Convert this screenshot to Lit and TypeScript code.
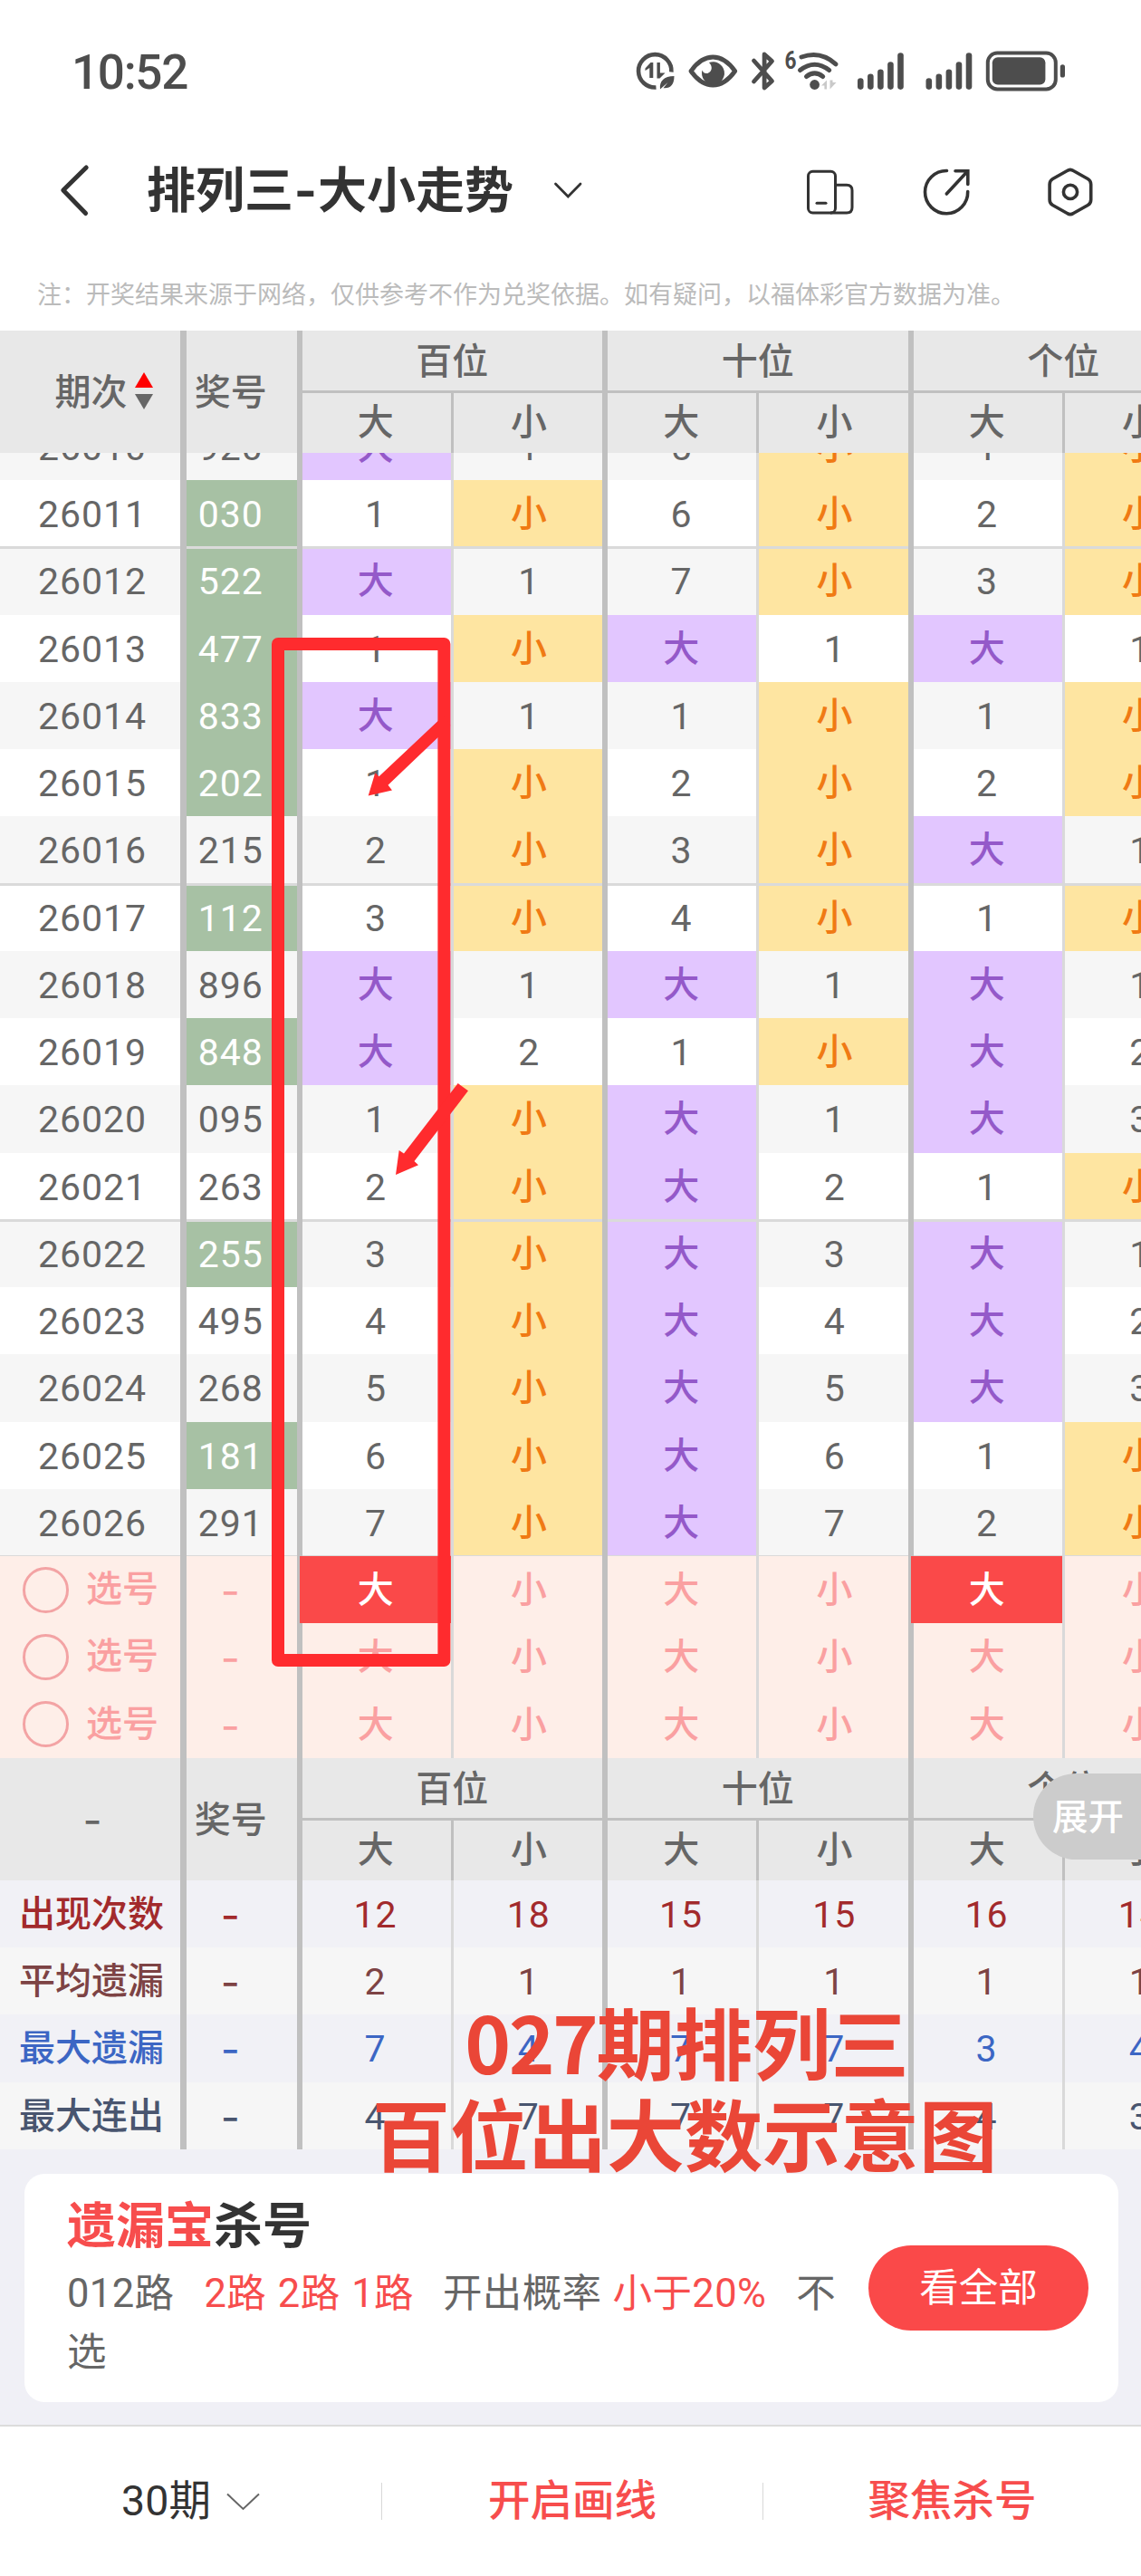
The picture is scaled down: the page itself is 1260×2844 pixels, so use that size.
import { LitElement, html, svg, css } from "lit";
import { customElement, property } from "lit/decorators.js";
import { classMap } from "lit/directives/class-map.js";

interface Draw {
  issue: string;
  code: string;
  group: boolean;
  cells: string;
}

const BIG = "大";
const SMALL = "小";

const DRAWS: Draw[] = [
  ["26010", "920", 0, "大15小1小"],
  ["26011", "030", 1, "1小6小2小"],
  ["26012", "522", 1, "大17小3小"],
  ["26013", "477", 1, "1小大1大1"],
  ["26014", "833", 1, "大11小1小"],
  ["26015", "202", 1, "1小2小2小"],
  ["26016", "215", 0, "2小3小大1"],
  ["26017", "112", 1, "3小4小1小"],
  ["26018", "896", 0, "大1大1大1"],
  ["26019", "848", 1, "大21小大2"],
  ["26020", "095", 0, "1小大1大3"],
  ["26021", "263", 0, "2小大21小"],
  ["26022", "255", 1, "3小大3大1"],
  ["26023", "495", 0, "4小大4大2"],
  ["26024", "268", 0, "5小大5大3"],
  ["26025", "181", 1, "6小大61小"],
  ["26026", "291", 0, "7小大72小"],
].map(([issue, code, group, cells]) => ({
  issue: issue as string,
  code: code as string,
  group: group === 1,
  cells: cells as string,
}));

const PICKS: number[][] = [[0, 4], [], []];

const STATS = [
  { label: "出现次数", tone: "count", values: [12, 18, 15, 15, 16, 14] },
  { label: "平均遗漏", tone: "avg", values: [2, 1, 1, 1, 1, 1] },
  { label: "最大遗漏", tone: "gap", values: [7, 4, 7, 7, 3, 4] },
  { label: "最大连出", tone: "run", values: [4, 7, 7, 7, 4, 3] },
];

@customElement("status-bar")
export class StatusBar extends LitElement {
  static styles = css`
    :host {
      display: flex;
      justify-content: space-between;
      align-items: center;
      height: 159px;
      padding: 0 80px 0 79px;
      box-sizing: border-box;
      color: #4d4d4d;
    }
    .time {
      font: 500 53px/60px Roboto, "Noto Sans", sans-serif;
      letter-spacing: -1.3px;
      padding-top: 1px;
    }
    svg {
      display: block;
    }
    .six {
      font: 700 27px Roboto, sans-serif;
    }
  `;

  private bars(x: number) {
    const tops = [85.7, 81, 76, 67.7, 57.7];
    return tops.map(
      (y, i) => svg`<rect x=${x + i * 11.05} y=${y} width="6.6" height=${98.4 - y} rx="3.3"></rect>`,
    );
  }

  render() {
    return html`
      <span class="time">10:52</span>
      <svg width="480" height="56" viewBox="700 51.5 480 56" fill="#4d4d4d">
        <path d="M724.5 96A18.2 18.2 0 1 1 741.4 79" fill="none" stroke="#4d4d4d" stroke-width="4.6"></path>
        <path d="M712.5 75l6-6.4h2.8v17h-4V74.500l-4.800 3zM725.500 68.500h3.400v11.500h5.600l-6 6h-3z"></path>
        <path d="M729 98c-1-9 4-14.500 15.500-14.500 0 10-4.500 14-12 13.200l5-6.200-6.800 6z"></path>
        <path d="M763 78c7-10 15-15.500 24.300-15.500S804.600 68 811.700 78c-7.100 10-15.100 15.500-24.400 15.500S770 88 763 78z" fill="none" stroke="#4d4d4d" stroke-width="4.8" stroke-linejoin="round"></path>
        <path d="M783 68.600a12.500 12.500 0 1 1-7.600 8.400c1 3 3.500 4 6 3.400 5-1.400 6-7.400 1.600-11.800z"></path>
        <path d="M832.500 66.500l20 22.500-8.400 7.500V59.500l8.400 7.500-20 22.500" fill="none" stroke="#4d4d4d" stroke-width="4.800" stroke-linejoin="round" stroke-linecap="round"></path>
        <text class="six" x="866.500" y="75.500" textLength="13" lengthAdjust="spacingAndGlyphs">6</text>
        <g fill="none" stroke="#4d4d4d" stroke-width="5" stroke-linecap="round">
          <path d="M885 62.500Q906 55 923 70.300"></path>
          <path d="M883.500 77Q899.600 64.500 915.700 77"></path>
          <path d="M890.500 84Q899.600 76.800 908.700 84"></path>
        </g>
        <circle cx="899.600" cy="93" r="5.400"></circle>
        <path d="M907 94l6-6v10h-2.600v-4zM916.500 88v10l7-7.500h-4V88z" fill="#c9c9c9"></path>
        ${this.bars(947)} ${this.bars(1022.5)}
        <rect x="1090.800" y="58" width="75" height="40" rx="10.500" fill="none" stroke="#4d4d4d" stroke-width="4"></rect>
        <rect x="1095.800" y="62.800" width="58.600" height="30.200" rx="6"></rect>
        <rect x="1170.800" y="70.700" width="5.200" height="14.300" rx="2.600"></rect>
      </svg>
    `;
  }
}

@customElement("nav-bar")
export class NavBar extends LitElement {
  static styles = css`
    :host {
      display: flex;
      align-items: center;
      height: 102px;
      padding: 0 48px 0 64px;
      box-sizing: border-box;
      color: #333;
    }
    svg {
      display: block;
      flex: none;
    }
    .title {
      margin: 0 43px 0 62px;
      padding-top: 2px;
      font: 700 54px/60px Inter, "Noto Sans CJK SC", sans-serif;
      white-space: nowrap;
    }
    .dash {
      display: inline-block;
      width: 27px;
      text-align: center;
    }
    .tools {
      display: flex;
      align-items: center;
      gap: 75px;
      margin-left: auto;
      padding-top: 4px;
    }
    .settings {
      margin-left: 6px;
    }
  `;

  render() {
    return html`
      <svg width="36" height="60" viewBox="64 181 36 60" fill="none" stroke="#333" stroke-width="5" stroke-linecap="round" stroke-linejoin="round">
        <path d="M95.200 186L69.800 211L94.600 236.500"></path>
      </svg>
      <span class="title">排列三<span class="dash">-</span>大小走势</span>
      <svg width="34" height="22" viewBox="611 200 34 22" fill="none" stroke="#333" stroke-width="2.800" stroke-linecap="round">
        <path d="M614.500 204L628.300 218L642 204"></path>
      </svg>
      <div class="tools">
        <svg width="54" height="56" viewBox="890 184.500 54 56" fill="none" stroke="#333" stroke-width="3">
          <rect x="892.500" y="189.800" width="30" height="45.700" rx="5"></rect>
          <path d="M922.500 204.800H935q6 0 6 6V229.500q0 6-6 6H917"></path>
          <path d="M902 224.800H912" stroke-linecap="round"></path>
        </svg>
        <svg width="56" height="56" viewBox="1019 184.500 56 56" fill="none" stroke="#333" stroke-width="3.600" stroke-linecap="round">
          <path d="M1045.500 189A23.600 23.600 0 1 0 1068.700 212"></path>
          <path d="M1045.300 214.500L1068.500 189.500M1055 189.200H1068.800V204"></path>
        </svg>
        <svg class="settings" width="56" height="58" viewBox="1156 183.500 56 58" fill="none" stroke="#333" stroke-width="3.600" stroke-linejoin="round">
          <path d="M1178.500 189q3.400-2.400 6.800 0L1201.300 198q3.400 2 3.400 6V221q0 4-3.400 6L1185.300 236q-3.400 2.400-6.800 0L1162.500 227q-3.400-2-3.400-6V204q0-4 3.400-6z"></path>
          <circle cx="1182" cy="212.400" r="7.600"></circle>
        </svg>
      </div>
    `;
  }
}

@customElement("trend-head")
export class TrendHead extends LitElement {
  @property({ type: Boolean }) sortable = false;

  static styles = css`
    :host {
      display: grid;
      grid-template-columns: 206px 127.5px repeat(3, 337.5px);
      height: 135px;
      background: #e8e8e8;
      color: #666;
      font: 500 40px/40px "Noto Sans CJK SC", sans-serif;
      text-align: center;
    }
    .lead,
    .group {
      box-sizing: border-box;
      border-right: 6.6px solid #c0c0c0;
    }
    .lead {
      display: flex;
      align-items: center;
      justify-content: center;
      gap: 8px;
      padding-bottom: 5px;
    }
    .lead svg {
      padding-top: 3px;
    }
    .issue {
      border-right-width: 7px;
      padding-left: 30px;
    }
    .issue.plain {
      padding: 1px 0 0 5px;
      font: 400 46px/40px Inter, sans-serif;
    }
    .code {
      padding-right: 24px;
    }
    .group {
      display: grid;
      grid-template-rows: 66px 66px;
      row-gap: 3px;
    }
    .name {
      display: flex;
      align-items: center;
      justify-content: center;
      box-sizing: border-box;
      padding-bottom: 4px;
      box-shadow: 0 3px 0 #c0c0c0;
    }
    .halves {
      display: grid;
      grid-template-columns: 167.250px 1fr;
    }
    .half {
      display: flex;
      align-items: center;
      justify-content: center;
      padding: 0 0 8px 2px;
    }
    .half:first-child {
      border-right: 3px solid #c0c0c0;
      padding: 0 2px 8px 0;
    }
    svg {
      display: block;
    }
  `;

  render() {
    return html`
      ${this.sortable
        ? html`<div class="lead issue">
            <span>期次</span>
            <svg width="20" height="41" viewBox="0 0 20 41">
              <path d="M10 0L20 17H0z" fill="#f00"></path>
              <path d="M0 24H20L10 41z" fill="#666"></path>
            </svg>
          </div>`
        : html`<div class="lead issue plain">-</div>`}
      <div class="lead code">奖号</div>
      ${["百位", "十位", "个位"].map(
        (name) => html`<div class="group">
          <div class="name">${name}</div>
          <div class="halves">
            <div class="half">${BIG}</div>
            <div class="half">${SMALL}</div>
          </div>
        </div>`,
      )}
    `;
  }
}

@customElement("trend-table")
export class TrendTable extends LitElement {
  static styles = css`
    :host {
      display: block;
      position: relative;
      overflow: hidden;
      height: 2007.75px;
    }
    .scroll {
      overflow: hidden;
      width: 1347px;
    }
    .rows {
      margin-top: -44.250px;
    }
    .row {
      display: grid;
      grid-template-columns: 206px 127.500px repeat(3, 167.250px 170.250px);
      height: 74.250px;
      background: #fff;
      color: #666;
      font: 400 41px/72px Roboto, "Noto Sans CJK SC", sans-serif;
      text-align: center;
    }
    .alt {
      background: #f6f6f6;
    }
    .cell {
      box-sizing: border-box;
      border-right: 6.600px solid #c0c0c0;
      padding: 2px 0 0 2px;
    }
    .big {
      border-right: 3px solid #d9d9d9;
      padding: 2px 2px 0 0;
    }
    .issue {
      border-right-width: 7px;
      padding-left: 5px;
      letter-spacing: 1px;
    }
    .code {
      padding: 2px 24px 0 0;
      letter-spacing: 1px;
    }
    .zh {
      font-size: 40px;
      font-weight: 500;
    }
    .dash {
      font-family: Inter, sans-serif;
      font-size: 46px;
    }
    .green {
      background: #a7c1a4;
      color: #fff;
    }
    .hit-big {
      background: #e2c6ff;
      color: #9459c9;
    }
    .hit-small {
      background: #fee5a1;
      color: #f07a14;
    }
    .above .cell {
      box-shadow: inset 0 -1px 0 #dadada;
    }
    .below .cell {
      box-shadow: inset 0 2px 0 #dadada;
    }
    .pick {
      background: #feeee8;
      color: #faa0a1;
      font-size: 40px;
      font-weight: 500;
    }
    .pick .dash {
      font-weight: 400;
    }
    .picker {
      display: flex;
      align-items: center;
      gap: 19px;
      padding: 0 0 0 25px;
      letter-spacing: 0;
    }
    .radio {
      box-sizing: border-box;
      width: 51px;
      height: 51px;
      border: 3.400px solid #f3a3a4;
      border-radius: 50%;
    }
    .chosen {
      position: relative;
      margin-left: -3px;
      padding-left: 3px;
      background: #fa4949;
      color: #fff;
    }
    .stat {
      background: #f1f1f6;
      letter-spacing: 1px;
    }
    .stat .issue {
      font-size: 40px;
      font-weight: 500;
      letter-spacing: 0;
      padding-left: 3px;
    }
    .stat.alt {
      background: #f6f6f6;
    }
    .count {
      color: #a22a2c;
    }
    .avg {
      color: #7d4344;
    }
    .gap {
      color: #3c66c4;
    }
    .run {
      color: #49556f;
    }
    .expand {
      position: absolute;
      top: 1593px;
      right: 0;
      width: 119px;
      height: 95px;
      box-sizing: border-box;
      padding-left: 21px;
      border-radius: 48px 0 0 48px;
      background: #ccc;
      color: #fff;
      font: 500 39.500px/89px "Noto Sans CJK SC", sans-serif;
    }
  `;

  private drawRow(d: Draw, i: number) {
    const row = classMap({
      row: true,
      alt: i % 2 === 0,
      above: i % 5 === 1,
      below: i > 0 && i % 5 === 2,
    });
    return html`<div class=${row}>
      <div class="cell issue">${d.issue}</div>
      <div class=${classMap({ cell: true, code: true, green: d.group })}>${d.code}</div>
      ${[...d.cells].map(
        (v, c) => html`<div
          class=${classMap({
            cell: true,
            big: c % 2 === 0,
            zh: v === BIG || v === SMALL,
            "hit-big": v === BIG,
            "hit-small": v === SMALL,
          })}
        >${v}</div>`,
      )}
    </div>`;
  }

  private pickRow(chosen: number[]) {
    return html`<div class="row pick">
      <div class="cell issue picker"><span class="radio"></span><span>选号</span></div>
      <div class="cell code dash">-</div>
      ${[0, 1, 2, 3, 4, 5].map(
        (c) => html`<div class=${classMap({ cell: true, big: c % 2 === 0, chosen: chosen.includes(c) })}>${c % 2 ? SMALL : BIG}</div>`,
      )}
    </div>`;
  }

  render() {
    return html`
      <trend-head sortable></trend-head>
      <div class="scroll">
        <div class="rows">${DRAWS.map((d, i) => this.drawRow(d, i))}</div>
        ${PICKS.map((p) => this.pickRow(p))}
      </div>
      <trend-head></trend-head>
      <div class="scroll">
        ${STATS.map(
          (s, i) => html`<div class="row stat ${s.tone} ${i % 2 ? "alt" : ""}">
            <div class="cell issue">${s.label}</div>
            <div class="cell code dash">-</div>
            ${s.values.map((v, c) => html`<div class=${classMap({ cell: true, big: c % 2 === 0 })}>${v}</div>`)}
          </div>`,
        )}
      </div>
      <div class="expand">展开</div>
    `;
  }
}

@customElement("app-root")
export class AppRoot extends LitElement {
  static styles = css`
    :host {
      display: block;
      position: relative;
      width: 1260px;
      height: 2844px;
      overflow: hidden;
      background: #fff;
      font-family: Roboto, "Noto Sans CJK SC", sans-serif;
    }
    .note {
      height: 104px;
      box-sizing: border-box;
      padding: 43px 0 0 41px;
      color: #bbb;
      font: 400 27px/40px "Noto Sans CJK SC", sans-serif;
      white-space: nowrap;
    }
    .promo {
      height: 304.250px;
      box-sizing: border-box;
      padding: 27.250px 25px 0 27px;
      background: #f0f0f6;
    }
    .card {
      display: flex;
      justify-content: space-between;
      height: 252px;
      box-sizing: border-box;
      padding: 23px 33px 0 47px;
      border-radius: 22px;
      background: #fff;
    }
    .head {
      color: #333;
      font: 700 54px/62px "Noto Sans CJK SC", sans-serif;
    }
    .text {
      width: 862px;
      margin-top: 15px;
      color: #666;
      font-size: 43.500px;
      line-height: 65px;
      letter-spacing: 0.400px;
      word-spacing: 1.400px;
    }
    .red {
      color: #f74d4d;
    }
    .routes {
      margin: 0 32px 0 33px;
    }
    .chance {
      margin: 0 33px 0 12px;
    }
    .all {
      width: 243px;
      height: 94px;
      margin-top: 56px;
      border-radius: 47px;
      background: #fa4949;
      color: #fff;
      font: 400 43.500px/87px "Noto Sans CJK SC", sans-serif;
      text-align: center;
    }
    .footer {
      display: grid;
      grid-template-columns: 421px 421px 1fr;
      align-items: center;
      height: 167px;
      box-sizing: border-box;
      border-top: 2px solid #dcdcdc;
      background: #fff;
      color: #f74d4d;
      font: 500 46.500px/48px Roboto, "Noto Sans CJK SC", sans-serif;
      text-align: center;
    }
    .tab {
      height: 41px;
      line-height: 41px;
      border-left: 1px solid #d8d8d8;
    }
    .period {
      display: flex;
      align-items: center;
      justify-content: center;
      gap: 17px;
      border-left: 0;
      color: #333;
      font-weight: 400;
    }
    .marks {
      position: absolute;
      left: 0;
      top: 0;
      pointer-events: none;
    }
    .caption {
      position: absolute;
      left: 0;
      top: 2201.500px;
      width: 1512px;
      color: #ea4637;
      font: 700 86.300px/101px "Noto Sans CJK SC", sans-serif;
      text-align: center;
      white-space: nowrap;
    }
    .first {
      padding-left: 5px;
    }
    .number {
      letter-spacing: -2.500px;
    }
  `;

  render() {
    return html`
      <status-bar></status-bar>
      <nav-bar></nav-bar>
      <div class="note">注：开奖结果来源于网络，仅供参考不作为兑奖依据。如有疑问，以福体彩官方数据为准。</div>
      <trend-table></trend-table>
      <div class="promo">
        <div class="card">
          <div>
            <div class="head"><span class="red">遗漏宝</span>杀号</div>
            <div class="text">012路<span class="red routes">2路 2路 1路</span>开出概率<span class="red chance">小于20%</span>不选</div>
          </div>
          <div class="all">看全部</div>
        </div>
      </div>
      <div class="footer">
        <div class="tab period">
          <span>30期</span>
          <svg width="37" height="20" viewBox="0 0 37 20" fill="none" stroke="#666" stroke-width="2">
            <path d="M1 1.500L18.500 18L36 1.500"></path>
          </svg>
        </div>
        <div class="tab">开启画线</div>
        <div class="tab">聚焦杀号</div>
      </div>
      <svg class="marks" width="1260" height="2844" viewBox="0 0 1260 2844" fill="#ff2b2e">
        <rect x="307" y="711" width="183.400" height="1122" fill="none" stroke="#ff2b2e" stroke-width="14" stroke-linejoin="round"></rect>
        <path d="M406.700 878.600L414.300 853.300L418.500 857.300L490 790L497.400 801L428.500 866.700L433 872.400z"></path>
        <path d="M437 1297L440.700 1270L446 1273.500L505.700 1196L517 1204.300L457.500 1282L462 1286.300z"></path>
      </svg>
      <div class="caption">
        <div class="first"><span class="number">027</span>期排列三</div>
        <div>百位出大数示意图</div>
      </div>
    `;
  }
}
